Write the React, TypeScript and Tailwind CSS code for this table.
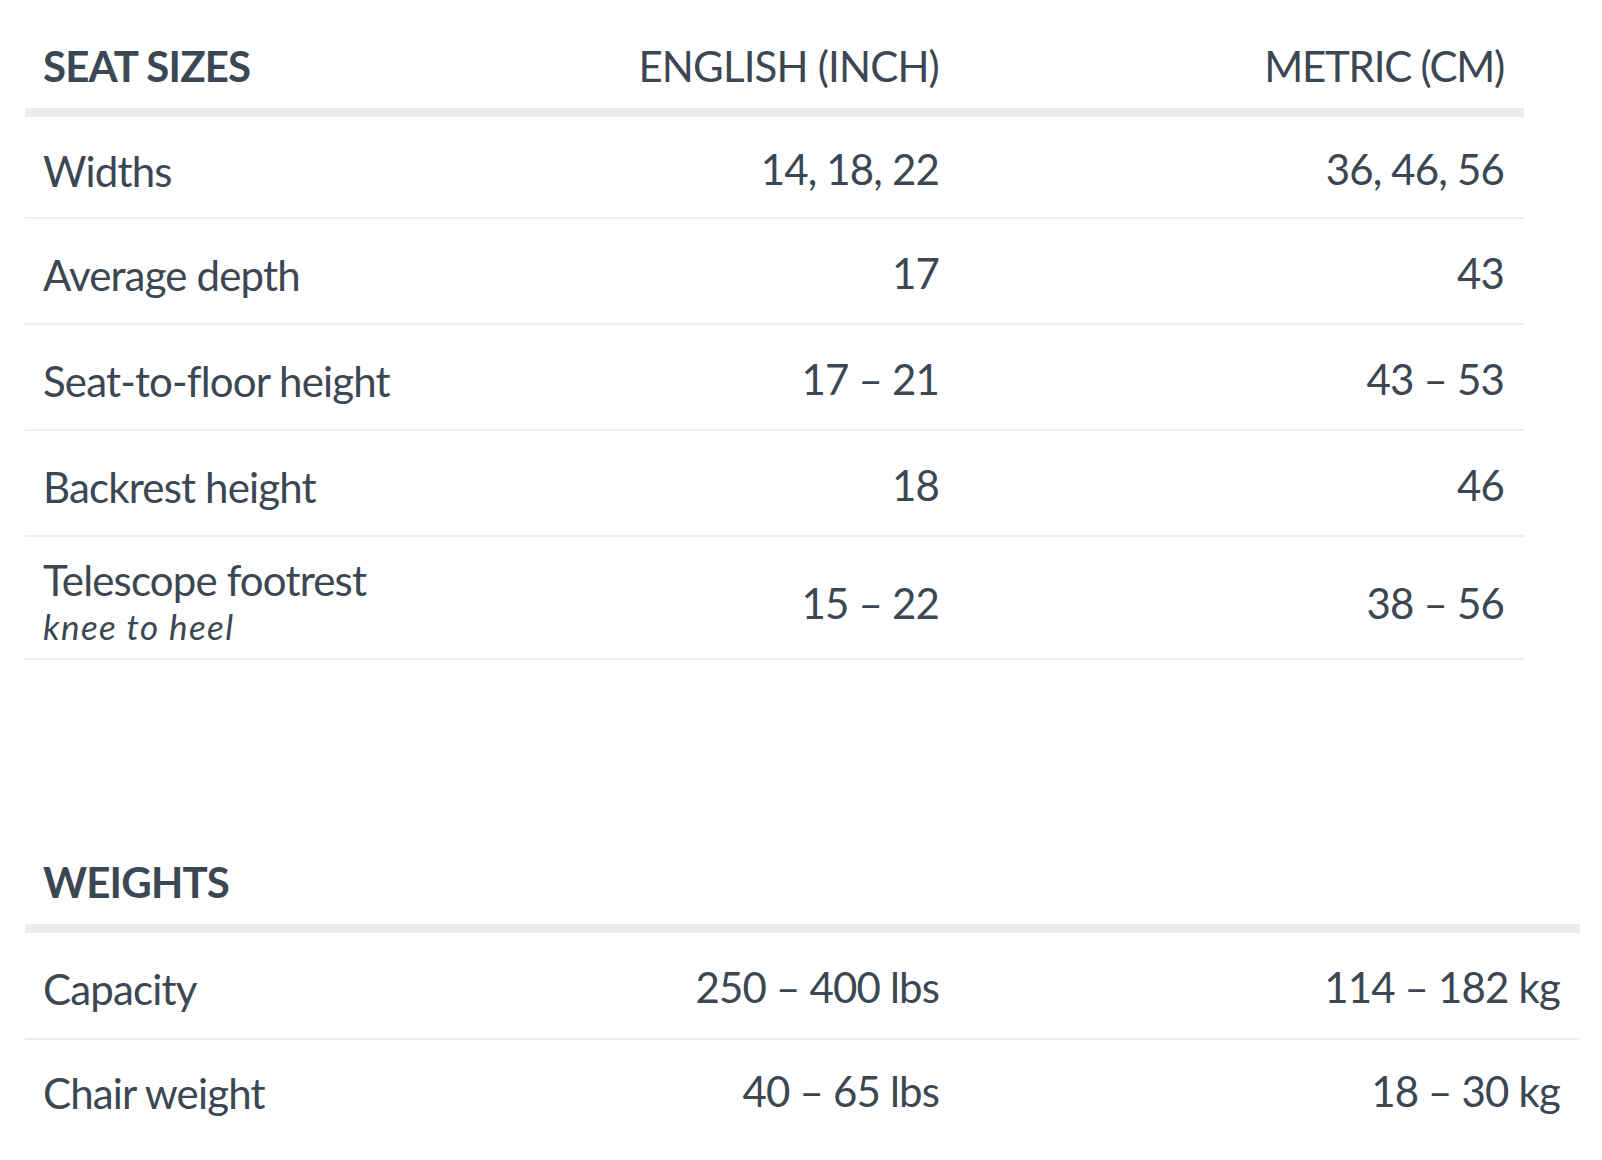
const seatRows = [
  { label: "Widths", note: "", inch: "14, 18, 22", cm: "36, 46, 56", h: "h-[102px]" },
  { label: "Average depth", note: "", inch: "17", cm: "43", h: "h-[106px]" },
  { label: "Seat-to-floor height", note: "", inch: "17 – 21", cm: "43 – 53", h: "h-[106px]" },
  { label: "Backrest height", note: "", inch: "18", cm: "46", h: "h-[106px]" },
  { label: "Telescope footrest", note: "knee to heel", inch: "15 – 22", cm: "38 – 56", h: "h-[123px]" },
];

const weightRows = [
  { label: "Capacity", note: "", inch: "250 – 400 lbs", cm: "114 – 182 kg", h: "h-[107px]" },
  { label: "Chair weight", note: "", inch: "40 – 65 lbs", cm: "18 – 30 kg", h: "h-[98px]" },
];

type Row = (typeof seatRows)[number];

function SpecTable({
  title,
  showUnits,
  rows,
  width,
}: {
  title: string;
  showUnits: boolean;
  rows: Row[];
  width: string;
}) {
  return (
    <div className={`${width} grid grid-cols-[438px_496px_1fr]`}>
      <div className="flex h-[93px] items-center border-b-[9px] border-[#ececec] pl-[18px]">
        <span className="text-[42px] font-bold uppercase tracking-[-0.02em]">{title}</span>
      </div>
      <div className="flex h-[93px] items-center justify-end border-b-[9px] border-[#ececec] pr-5">
        {showUnits && <span className="text-[42px] uppercase tracking-[-0.02em]">English (inch)</span>}
      </div>
      <div className="flex h-[93px] items-center justify-end border-b-[9px] border-[#ececec] pr-5">
        {showUnits && <span className="text-[42px] uppercase tracking-[-0.03em]">Metric (cm)</span>}
      </div>

      {rows.map((row, i) => {
        const last = i === rows.length - 1 && rows.length === 2;
        const line = last ? "" : "border-b-2 border-[#eeeeee]";
        const pad = row.note ? "pt-3" : "pt-1";
        return (
          <div key={row.label} className="contents">
            <div className={`flex ${row.h} flex-col justify-center pl-[18px] pt-2 ${line}`}>
              <span className="text-[42px] leading-[1.1] tracking-[-0.02em]">{row.label}</span>
              {row.note && (
                <span className="mt-1 text-[35px] italic leading-[1.1] tracking-[0.04em]">{row.note}</span>
              )}
            </div>
            <div className={`flex ${row.h} items-center justify-end pr-5 ${pad} ${line}`}>
              <span className="text-[42px] tracking-[-0.02em]">{row.inch}</span>
            </div>
            <div className={`flex ${row.h} items-center justify-end pr-5 ${pad} ${line}`}>
              <span className="text-[42px] tracking-[-0.02em]">{row.cm}</span>
            </div>
          </div>
        );
      })}
    </div>
  );
}

export default function App() {
  return (
    <div className="min-h-[1160px] bg-white pl-[25px] pt-6 text-[#3b4752] [font-family:Lato,'Noto_Sans',sans-serif]">
      <SpecTable title="Seat sizes" showUnits rows={seatRows} width="w-[1499px]" />
      <div className="mt-[180px]">
        <SpecTable title="Weights" showUnits={false} rows={weightRows} width="w-[1555px]" />
      </div>
    </div>
  );
}
